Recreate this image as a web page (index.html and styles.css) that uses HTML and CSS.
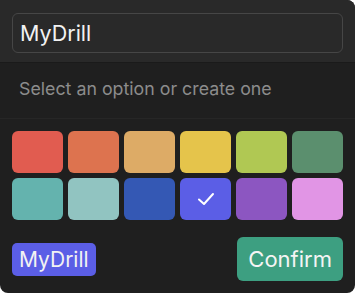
FILE: index.html
```html
<!DOCTYPE html>
<html lang="en">

<head>
	<meta charset="UTF-8">
	<title>Tag picker</title>
	<link rel="stylesheet" href="styles.css">
</head>

<body>
	<div class="panel">
		<!-- name input -->
		<div class="panel-head">
			<div class="name-input">MyDrill</div>
		</div>
		<!-- hint -->
		<div class="hint">Select an option or create one</div>
		<!-- colour grid -->
		<div class="colors">
			<div class="swatch c-red"></div>
			<div class="swatch c-orange"></div>
			<div class="swatch c-tan"></div>
			<div class="swatch c-yellow"></div>
			<div class="swatch c-lime"></div>
			<div class="swatch c-green"></div>
			<div class="swatch c-teal"></div>
			<div class="swatch c-mint"></div>
			<div class="swatch c-blue"></div>
			<div class="swatch c-indigo selected">
				<svg width="18" height="14" viewBox="0 0 18 14">
					<path d="M2 7.5 L7 12 L16 2" fill="none" stroke="#fff" stroke-width="2" stroke-linecap="round" stroke-linejoin="round" />
				</svg>
			</div>
			<div class="swatch c-purple"></div>
			<div class="swatch c-pink"></div>
		</div>
		<!-- footer -->
		<div class="panel-foot">
			<span class="tag">MyDrill</span>
			<button class="confirm">Confirm</button>
		</div>
	</div>
</body>

</html>
```

FILE: styles.css
```css
* {
	margin: 0;
	padding: 0;
	box-sizing: border-box;
	font-family: Inter, "Noto Sans", sans-serif;
}

body {
	background-color: #fff;
}

.panel {
	width: 355px;
	height: 293px;
	background-color: #1f1f1f;
	border-radius: 0 8px 8px 8px;
	overflow: hidden;
}

/* top with input */
.panel-head {
	height: 63px;
	background-color: #292929;
	padding: 13px 12px 0 12px;
	border-bottom: 1px solid #1a1a1a;
}

.name-input {
	height: 40px;
	border: 1px solid #464646;
	border-radius: 6px;
	padding: 0 7px;
	display: flex;
	align-items: center;
	color: #f2f2f2;
	font-size: 21.5px;
}

.hint {
	height: 56px;
	padding: 0 19px 5px 19px;
	display: flex;
	align-items: center;
	color: #8c8c8c;
	font-size: 17.8px;
	border-bottom: 1px solid #262626;
}

.colors {
	padding: 12px 12px 0 12px;
	display: grid;
	grid-template-columns: repeat(6, 1fr);
	grid-auto-rows: 42px;
	gap: 5px;
}

.swatch {
	border-radius: 6px;
	display: flex;
	justify-content: center;
	align-items: center;
}

.c-red { background-color: #e15c50; }
.c-orange { background-color: #dd734f; }
.c-tan { background-color: #ddab66; }
.c-yellow { background-color: #e5c44b; }
.c-lime { background-color: #b0c853; }
.c-green { background-color: #5b8f6e; }
.c-teal { background-color: #64b3ae; }
.c-mint { background-color: #91c4c1; }
.c-blue { background-color: #3458b4; }
.c-indigo { background-color: #5b5ee6; }
.c-purple { background-color: #8c56c1; }
.c-pink { background-color: #e195e5; }

.panel-foot {
	padding: 17px 12px 0 12px;
	display: flex;
	justify-content: space-between;
	align-items: center;
}

.tag {
	height: 33px;
	padding: 0 7px;
	display: flex;
	align-items: center;
	background-color: #5b5ee6;
	color: #f2f2f2;
	font-size: 21px;
	border-radius: 5px;
}

.confirm {
	height: 44px;
	padding: 0 11px;
	border: none;
	background-color: #3d9f81;
	color: #f4f4f4;
	font-size: 22px;
	border-radius: 6px;
}
```
